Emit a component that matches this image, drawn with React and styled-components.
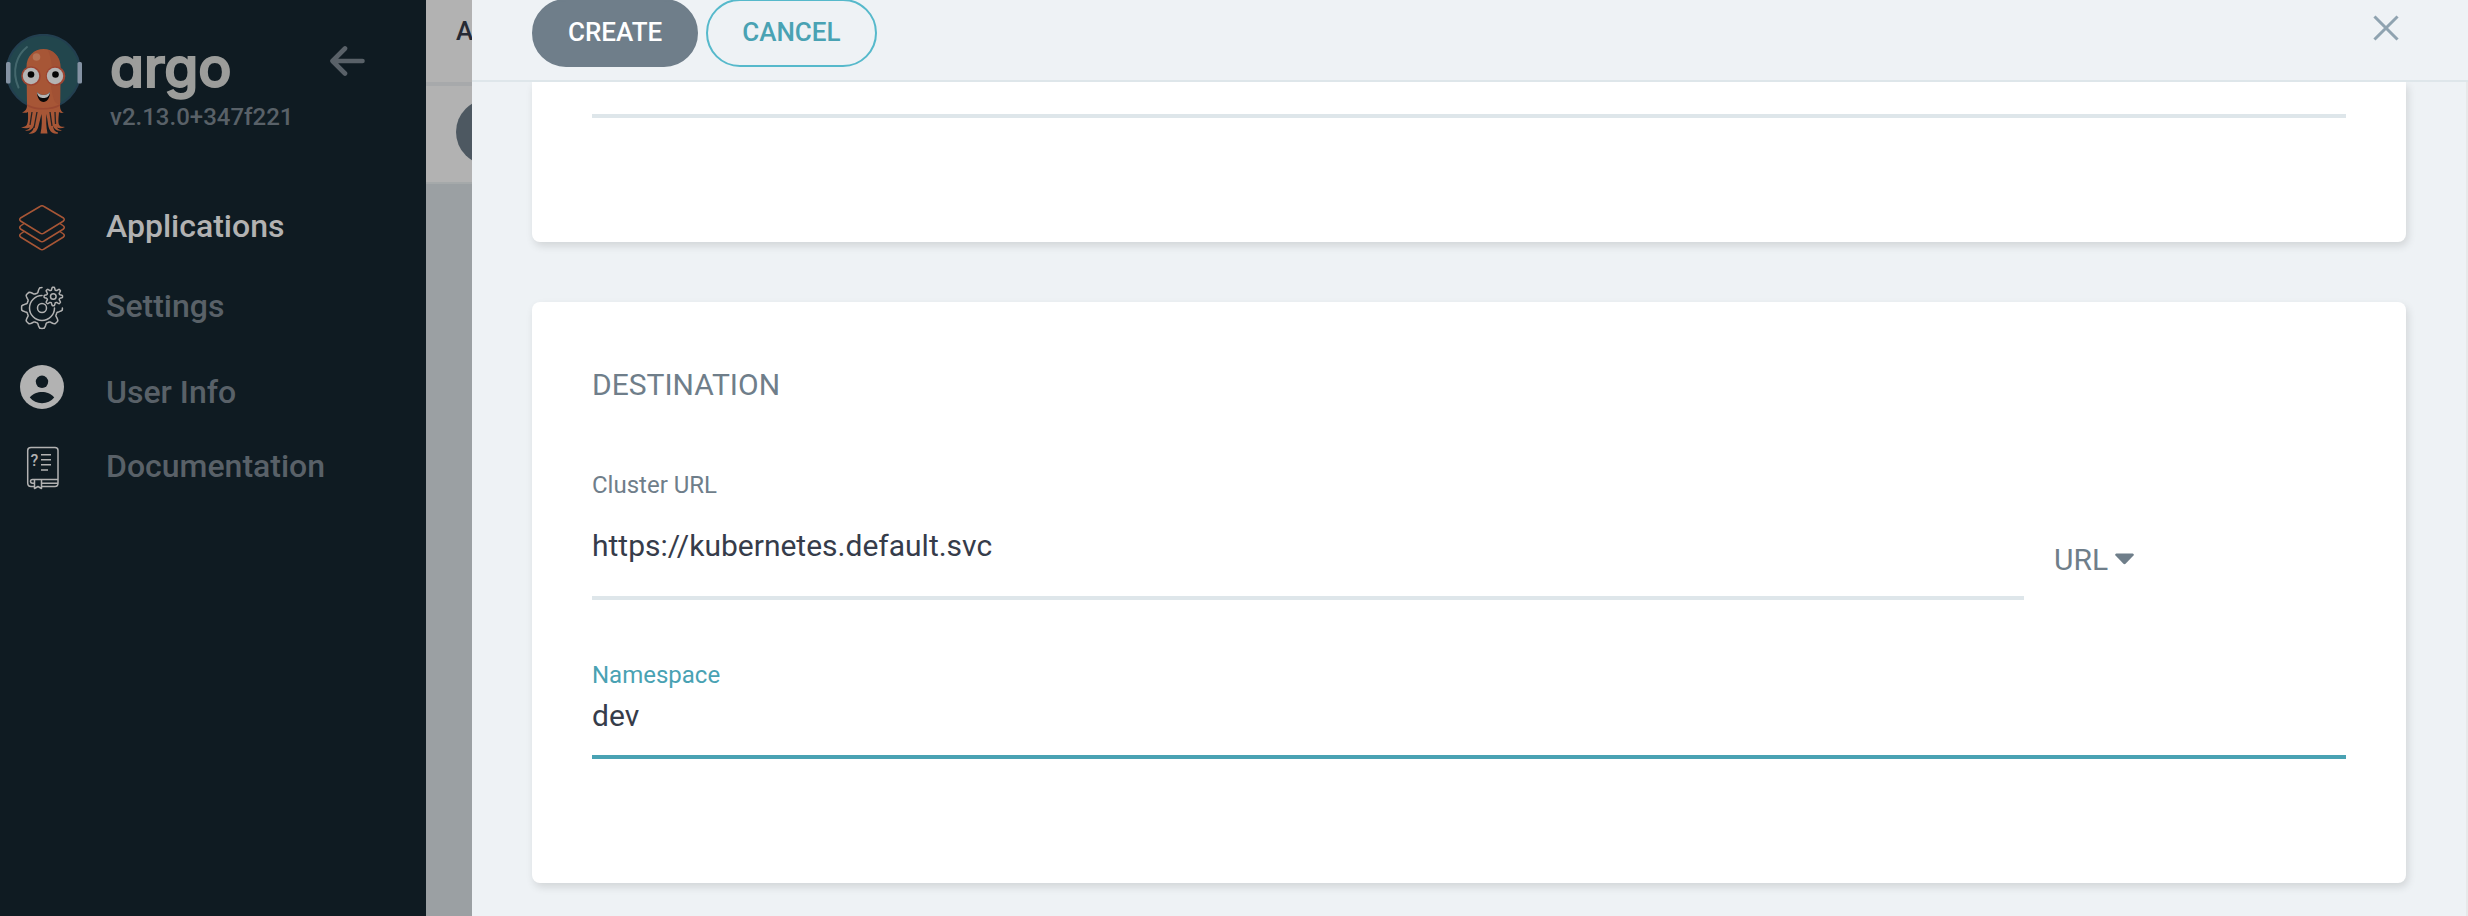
import React, {useState} from "react";
import styled, {createGlobalStyle, css} from "styled-components";


const colors = {
    sidebar: "#0f1b22",
    dim: "#596168",
    light: "#b2b2b2",
    orange: "#a75636",
    panel: "#eef2f5",
    line: "#dee6ea",
    grey: "#6f7e8a",
    teal: "#49a2b3",
    text: "#363c4a"
}


const GlobalStyle = createGlobalStyle`
    * {
      box-sizing: border-box;
    }

    body {
      margin: 0;
      font-family: Roboto, "Liberation Sans", sans-serif;
      color: ${colors.text};
    }
`

const Layout = styled.div`
    display: flex;
    height: 100vh;
    overflow: hidden;
`

const Sidebar = styled.aside`
    flex: none;
    width: 426px;
    background: ${colors.sidebar};
`

const Brand = styled.div`
    display: flex;
    align-items: flex-start;
    padding: 34px 61px 0 6px;
    height: 205px;
`

const BrandText = styled.div`
    margin-left: 27px;
    flex: 1;
`

const BrandName = styled.div`
    height: 67px;
    line-height: 66px;
    font-family: Inter, sans-serif;
    font-feature-settings: "cv11";
    font-size: 55px;
    font-weight: 500;
    color: #9c9d9b;
    -webkit-text-stroke: 2px #9c9d9b;
`

const Version = styled.div`
    line-height: 32px;
    font-size: 24px;
    font-weight: 500;
    color: ${colors.dim};
`

const CollapseButton = styled.button`
    display: flex;
    margin-top: 10px;
    padding: 0;
    border: none;
    background: transparent;
    cursor: pointer;
`

const Nav = styled.nav`
    display: flex;
    flex-direction: column;
    gap: 32px;
`

const NavItem = styled.a`
    display: flex;
    align-items: ${({$low}) => $low ? "flex-end" : "flex-start"};
    gap: 41px;
    height: 48px;
    padding-left: 19px;
    line-height: 42px;
    font-size: 32px;
    font-weight: 500;
    text-decoration: none;
    color: ${({$active}) => $active ? colors.light : colors.dim};

    svg {
      flex: none;
      align-self: flex-start;
    }
`

const Backdrop = styled.div`
    flex: none;
    width: 46px;
    overflow: hidden;
    background: #9ba0a3;
`

const BackdropTitle = styled.div`
    height: 86px;
    padding-left: 30px;
    line-height: 62px;
    font-size: 26px;
    font-weight: 500;
    color: #262a34;
    background: ${colors.light};
    border-bottom: 4px solid #a7a9ab;
`

const BackdropTools = styled.div`
    height: 98px;
    padding: 13px 0 0 30px;
    background: ${colors.light};
    border-bottom: 2px solid #a5a9aa;
`

const BackdropButton = styled.div`
    width: 160px;
    height: 66px;
    border-radius: 33px;
    background: #4d5861;
`

const Panel = styled.main`
    flex: 1;
    min-width: 0;
    display: flex;
    flex-direction: column;
    background: ${colors.panel};
`

const PanelHeader = styled.header`
    flex: none;
    display: flex;
    align-items: center;
    gap: 8px;
    height: 82px;
    padding: 0 69px 14px 60px;
    border-bottom: 2px solid ${colors.line};
`

const Button = styled.button`
    flex: none;
    height: 68px;
    padding: 0 34px 2px;
    border: 2px solid ${colors.grey};
    border-radius: 34px;
    font-family: inherit;
    font-size: 26px;
    font-weight: 500;
    color: #fff;
    background: ${colors.grey};
    cursor: pointer;

    ${({$outline}) => $outline && css`
      color: ${colors.teal};
      border-color: #56b9cb;
      background: transparent;
    `}
`

const CloseButton = styled.button`
    display: flex;
    margin-left: auto;
    margin-bottom: 10px;
    padding: 0;
    border: none;
    background: transparent;
    cursor: pointer;
`

const PanelBody = styled.div`
    flex: 1;
    overflow: hidden;
    padding: 0 60px;
    border-right: 2px solid #e7e8e9;
`

const Card = styled.section`
    margin-bottom: 60px;
    padding: ${({$continued}) => $continued ? "0 60px 124px" : "60px 60px 124px"};
    border-radius: ${({$continued}) => $continued ? "0 0 8px 8px" : "8px"};
    background: #fff;
    box-shadow: 2px 4px 8px rgba(0, 0, 0, 0.12);
`

const CardTitle = styled.h2`
    margin: 0 0 60px;
    line-height: 46px;
    font-size: 30px;
    font-weight: 400;
    color: ${colors.grey};
`

const FieldRow = styled.div`
    display: grid;
    grid-template-columns: minmax(0, 1fr) 292px;
    column-gap: 30px;
    align-items: end;
    margin-bottom: 58px;
`

const Label = styled.label`
    display: block;
    line-height: 34px;
    font-size: 24px;
    color: ${({$focused}) => $focused ? colors.teal : colors.grey};
`

const Input = styled.input`
    display: block;
    width: 100%;
    height: ${({$tall}) => $tall ? "98px" : "67px"};
    padding: ${({$tall}) => $tall ? "0 0 7px" : "0 0 17px"};
    border: none;
    border-bottom: 4px solid ${({$focused}) => $focused ? colors.teal : colors.line};
    outline: none;
    font-family: inherit;
    font-size: 30px;
    color: ${colors.text};
    background: transparent;
`

const PathInput = styled(Input)`
    height: 36px;
    padding: 0;
`

const Picker = styled.div`
    display: flex;
    align-items: center;
    gap: 6px;
    margin-bottom: 19px;
    color: ${colors.grey};
`

const PickerSelect = styled.select`
    appearance: none;
    height: 44px;
    padding: 0;
    border: none;
    outline: none;
    font-family: inherit;
    font-size: 30px;
    color: inherit;
    background: transparent;
    cursor: pointer;
`


const ArgoLogo = () => (
    <svg width="77" height="101" viewBox="6 34 77 101">
        <circle cx="43.5" cy="71.5" r="36.7" fill="#22464d" stroke="#233f50" strokeWidth="2"/>
        <path d="M27 47C17 55 11 70 18.500 87.500" fill="none" stroke="#44686d" strokeWidth="2" strokeLinecap="round"/>
        <rect x="6" y="62" width="4.500" height="21.500" rx="1.500" fill="#8492a3"/>
        <rect x="77.500" y="62" width="4.500" height="21.500" rx="1.500" fill="#8492a3"/>
        <path
            d="M26.500 67C26.500 56 34 49 43.500 49S60.500 56 60.500 67L60 105C60 109 61 112 64 112.500
               C61 113.500 59.500 112.500 59 112C58.500 119 57.500 124 60 126C61 127 63 126.500 65 127
               C62 128.500 58.500 128.500 57 127.500C58 129.500 60 129.500 62 130.500C58 131.500 54.500 130 53 126
               C53.500 130 55 131.500 58 132.500V133.500C52 134.500 49 131 48 124L46.500 114
               C46 120 46 126 47.500 133.500H40.500C42 126 42 120 41.500 114L39 124
               C37.500 131 35 134.500 28.500 133.500C32 132 33.500 130 34 126C32 130 29 131.500 25 130.500
               C27 129.500 29 129.500 30 127.500C28 128.500 24 128.500 21 127.500C24 126.500 26 126.500 27 124.500
               C28.500 121 28 116 28 112C26.500 113 24 113 22 112.500C25.500 111 27 109 27 105Z"
            fill={colors.orange}
        />
        <path d="M48 50C57 53 60.500 59 60.500 67V103C55 107 53 98 51 87C54 70 51 57 48 50Z" fill="#9c4b32" opacity="0.500"/>
        <path d="M27 105C35 110 51 110 60 105" fill="none" stroke="#94432f" strokeWidth="1.500" opacity="0.700"/>
        <path
            d="M32 112L30 125M37 112L34 128M50 112L52 126M55 112L55.500 124"
            stroke={colors.sidebar} strokeWidth="1.300" opacity="0.850"
        />
        <circle cx="36.500" cy="57" r="3.800" fill="#b47355"/>
        <circle cx="31" cy="76" r="9.800" fill="#9d4431"/>
        <circle cx="55.500" cy="76" r="9.800" fill="#9d4431"/>
        <circle cx="31" cy="76" r="8.200" fill="#b4b4b4"/>
        <circle cx="55" cy="76" r="8.200" fill="#b4b4b4"/>
        <circle cx="31" cy="74.500" r="3.300" fill="#050505"/>
        <circle cx="55.500" cy="74.500" r="3.300" fill="#050505"/>
        <path d="M37 92C40 96 47 96 50 92C50 98 47 102 43.500 102S37 98 37 92Z" fill="#0a0808"/>
        <path d="M37 92C40 96 47 96 50 92C49.500 97 46 98 43.500 98S37.500 97 37 92Z" fill="#b4b4b4"/>
    </svg>
)

const ArrowIcon = () => (
    <svg width="35" height="34" viewBox="0 0 35 34" fill="none" stroke={colors.dim} strokeWidth="4.600"
         strokeLinecap="round" strokeLinejoin="round">
        <path d="M15 4.500L2.500 17L15 29.500M3 17H32.500"/>
    </svg>
)

const LayersIcon = () => (
    <svg width="46" height="46" viewBox="0 0 46 46" fill="none" stroke={colors.orange} strokeWidth="1.500"
         strokeLinejoin="round">
        <path d="M21 1.500Q23 0 25 1.500L44.500 13Q46 14.500 44.500 16L25 28Q23 29.500 21 28L1.500 16Q0 14.500 1.500 13Z"/>
        <path d="M5 18.500L1.500 21Q0 22.500 1.500 24L21 36Q23 37.500 25 36L44.500 24Q46 22.500 44.500 21L41 18.500"/>
        <path d="M5 26.500L1.500 29Q0 30.500 1.500 32L21 44Q23 45.500 25 44L44.500 32Q46 30.500 44.500 29L41 26.500"/>
    </svg>
)

// outline of a cog with 8 teeth, angles in degrees
const cogPath = (cx, cy, radius, depth, from, to) => {
    const points = [];
    for (let deg = from; deg <= to; deg += 3) {
        const a = deg * Math.PI / 180;
        const wave = Math.max(-1, Math.min(1, 1.6 * Math.cos(8 * a)));
        const r = radius + depth * wave;
        points.push(`${(cx + r * Math.cos(a)).toFixed(2)} ${(cy + r * Math.sin(a)).toFixed(2)}`);
    }
    return "M" + points.join("L");
}

const SettingsIcon = () => (
    <svg width="46" height="46" viewBox="0 0 46 46" fill="none" stroke={colors.light} strokeWidth="1.500"
         strokeLinejoin="round" strokeLinecap="round">
        <path d={cogPath(23, 23, 18, 2.400, 0, 270)}/>
        <path d="M23 10.500A12.500 12.500 0 1 0 35.500 23"/>
        <circle cx="23" cy="23" r="4.500"/>
        <path d={cogPath(34.300, 11.500, 7.900, 1.300, 0, 360)}/>
        <circle cx="34.300" cy="11.500" r="2.800"/>
    </svg>
)

const UserIcon = () => (
    <svg width="46" height="46" viewBox="0 0 46 46">
        <circle cx="23" cy="22" r="22" fill={colors.light}/>
        <circle cx="23" cy="16.800" r="6.200" fill={colors.sidebar}/>
        <path d="M10.800 32.500C14 28.500 18.500 27 23 27S32 28.500 35.200 32.500C32 36.500 28 38.200 23 38.200S14 36.500 10.800 32.500Z"
              fill={colors.sidebar}/>
    </svg>
)

const DocsIcon = () => (
    <svg width="46" height="46" viewBox="0 0 46 46" fill="none" stroke={colors.light} strokeWidth="1.500"
         strokeLinejoin="round">
        <path d="M15 41.500H12Q8.700 41.500 8.700 38V5.500Q8.700 2.500 12 2.500H36Q39 2.500 39 5.500V38Q39 41.500 36 41.500H23"/>
        <path d="M39 34.500H13.500Q11.500 34.500 11.500 36.300T13.500 38.200H15M23 38.200H39"/>
        <path d="M15.500 34.500V43.500L19 41.500L22.500 43.500V34.500"/>
        <path d="M22 9.700H32M22 14.700H32M22 19.800H32M22 24.900H29"/>
        <text x="11.500" y="20.500" fontFamily="Roboto, sans-serif" fontSize="16" fill={colors.light} stroke="none">?</text>
    </svg>
)

const CloseIcon = () => (
    <svg width="26" height="26" viewBox="0 0 26 26" stroke="#8fa3b0" strokeWidth="3" strokeLinecap="square">
        <path d="M2.500 2.500L23.500 23.500M23.500 2.500L2.500 23.500"/>
    </svg>
)

const CaretIcon = () => (
    <svg width="19" height="12" viewBox="0 0 19 12">
        <path d="M1.300 0.500H17.700Q19.400 1 18.500 2.500L10.800 10.600Q9.500 11.800 8.200 10.600L0.500 2.500Q-0.400 1 1.300 0.500Z"
              fill="currentColor"/>
    </svg>
)


const navItems = [
    {title: "Applications", Icon: LayersIcon, active: true},
    {title: "Settings", Icon: SettingsIcon},
    {title: "User Info", Icon: UserIcon, low: true},
    {title: "Documentation", Icon: DocsIcon}
]


const App = () => {
    const [path, setPath] = useState("");
    const [cluster, setCluster] = useState("https://kubernetes.default.svc");
    const [namespace, setNamespace] = useState("dev");
    const [kind, setKind] = useState("URL");

    return (<Layout>
        <GlobalStyle/>

        <Sidebar>
            <Brand>
                <ArgoLogo/>
                <BrandText>
                    <BrandName>argo</BrandName>
                    <Version>v2.13.0+347f221</Version>
                </BrandText>
                <CollapseButton aria-label="Collapse">
                    <ArrowIcon/>
                </CollapseButton>
            </Brand>

            <Nav>
                {navItems.map(({title, Icon, active, low}) => (
                    <NavItem key={title} href="#" $active={active} $low={low}>
                        <Icon/>
                        {title}
                    </NavItem>
                ))}
            </Nav>
        </Sidebar>

        <Backdrop>
            <BackdropTitle>A</BackdropTitle>
            <BackdropTools>
                <BackdropButton/>
            </BackdropTools>
        </Backdrop>

        <Panel>
            <PanelHeader>
                <Button>CREATE</Button>
                <Button $outline>CANCEL</Button>
                <CloseButton aria-label="Close">
                    <CloseIcon/>
                </CloseButton>
            </PanelHeader>

            <PanelBody>
                <Card $continued>
                    <PathInput aria-label="Path" value={path} onChange={e => setPath(e.target.value)}/>
                </Card>

                <Card>
                    <CardTitle>DESTINATION</CardTitle>
                    <FieldRow>
                        <div>
                            <Label htmlFor="cluster">Cluster URL</Label>
                            <Input id="cluster" $tall value={cluster} onChange={e => setCluster(e.target.value)}/>
                        </div>
                        <Picker>
                            <PickerSelect aria-label="Cluster field" value={kind}
                                          onChange={e => setKind(e.target.value)}>
                                <option>URL</option>
                            </PickerSelect>
                            <CaretIcon/>
                        </Picker>
                    </FieldRow>
                    <Label htmlFor="namespace" $focused>Namespace</Label>
                    <Input id="namespace" $focused value={namespace} onChange={e => setNamespace(e.target.value)}/>
                </Card>
            </PanelBody>
        </Panel>
    </Layout>)

}

export default App;
